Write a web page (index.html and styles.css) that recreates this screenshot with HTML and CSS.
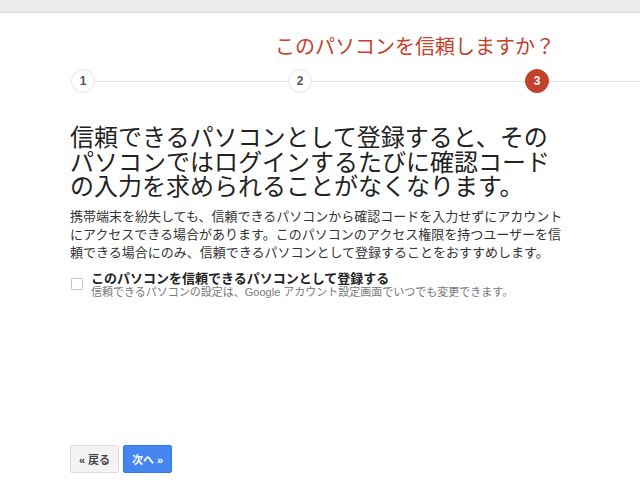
FILE: index.html
```html
<!DOCTYPE html>
<html lang="ja">
<head>
<meta charset="utf-8">
<link rel="stylesheet" href="styles.css">
</head>
<body>
<div class="topbar"></div>
<div class="title">このパソコンを信頼しますか？</div>
<div class="steps">
  <div class="step">1</div>
  <div class="seg seg1"></div>
  <div class="step">2</div>
  <div class="seg seg2"></div>
  <div class="step active">3</div>
  <div class="seg seg3"></div>
</div>
<div class="content">
  <h1 class="heading">信頼できるパソコンとして登録すると、そのパソコンではログインするたびに確認コードの入力を求められることがなくなります。</h1>
  <p class="desc">携帯端末を紛失しても、信頼できるパソコンから確認コードを入力せずにアカウントにアクセスできる場合があります。このパソコンのアクセス権限を持つユーザーを信頼できる場合にのみ、信頼できるパソコンとして登録することをおすすめします。</p>
  <label class="check">
    <span class="box"></span>
    <span class="labels">
      <span class="main">このパソコンを信頼できるパソコンとして登録する</span>
      <span class="sub">信頼できるパソコンの設定は、Google アカウント設定画面でいつでも変更できます。</span>
    </span>
  </label>
</div>
<div class="buttons">
  <button class="btn back">« 戻る</button>
  <button class="btn next">次へ »</button>
</div>
</body>
</html>
```

FILE: styles.css
```css
* { box-sizing: border-box; }
body {
  margin: 0;
  width: 640px;
  height: 480px;
  overflow: hidden;
  background: #fff;
  font-family: "Liberation Sans", "Noto Sans CJK JP", sans-serif;
  color: #222;
}
.topbar {
  height: 13px;
  background: #ebebeb;
  border-bottom: 1px solid #d9d9d9;
}
.title {
  margin-top: 21px;
  padding-left: 275px;
  font-family: "Noto Sans CJK JP", sans-serif;
  font-size: 20px;
  line-height: 24px;
  color: #c4412c;
}
.steps {
  display: flex;
  align-items: center;
  margin-top: 11px;
  padding-left: 71px;
}
.step {
  flex: none;
  width: 24px;
  height: 24px;
  border-radius: 50%;
  border: 1px solid #e6e6e6;
  background: #fff;
  display: flex;
  align-items: center;
  justify-content: center;
  font-family: "Liberation Sans", sans-serif;
  font-weight: bold;
  font-size: 12px;
  color: #555;
}
.step.active {
  background: #c4412c;
  border-color: #c4412c;
  color: #fff;
}
.seg { flex: none; height: 1px; background: #e0e0e0; }
.seg1 { width: 193px; }
.seg2 { width: 213px; }
.seg3 { width: 100px; }
.content {
  padding-left: 70px;
  width: 570px;
}
.heading {
  margin: 31px 0 0;
  font-family: "Noto Sans CJK JP", sans-serif;
  font-weight: normal;
  font-size: 24px;
  line-height: 24.5px;
  color: #222;
}
.desc {
  margin: 9px 0 0;
  font-family: "Noto Sans CJK JP", sans-serif;
  font-size: 13px;
  line-height: 18px;
  color: #333;
}
.check {
  display: flex;
  align-items: flex-start;
  margin-top: 9px;
}
.box {
  flex: none;
  width: 12px;
  height: 12px;
  border: 1px solid #c6c6c6;
  border-radius: 1px;
  margin: 8px 8px 0 1px;
}
.labels { display: flex; flex-direction: column; }
.main {
  font-family: "Noto Sans CJK JP", sans-serif;
  font-weight: bold;
  font-size: 13px;
  line-height: 15px;
  color: #222;
}
.sub {
  font-family: "Liberation Sans", "Noto Sans CJK JP", sans-serif;
  font-size: 11px;
  line-height: 14px;
  color: #777;
}
.buttons {
  position: absolute;
  left: 70px;
  top: 445px;
  display: flex;
  gap: 4px;
}
.btn {
  height: 28px;
  width: 49px;
  padding: 0;
  border-radius: 2px;
  font-family: "Liberation Sans", "Noto Sans CJK JP", sans-serif;
  font-weight: bold;
  font-size: 11px;
}
.back {
  background: #f3f3f3;
  border: 1px solid #dcdcdc;
  color: #444;
}
.next {
  background: #4585f0;
  border: 1px solid #3079ed;
  color: #fff;
}
```
